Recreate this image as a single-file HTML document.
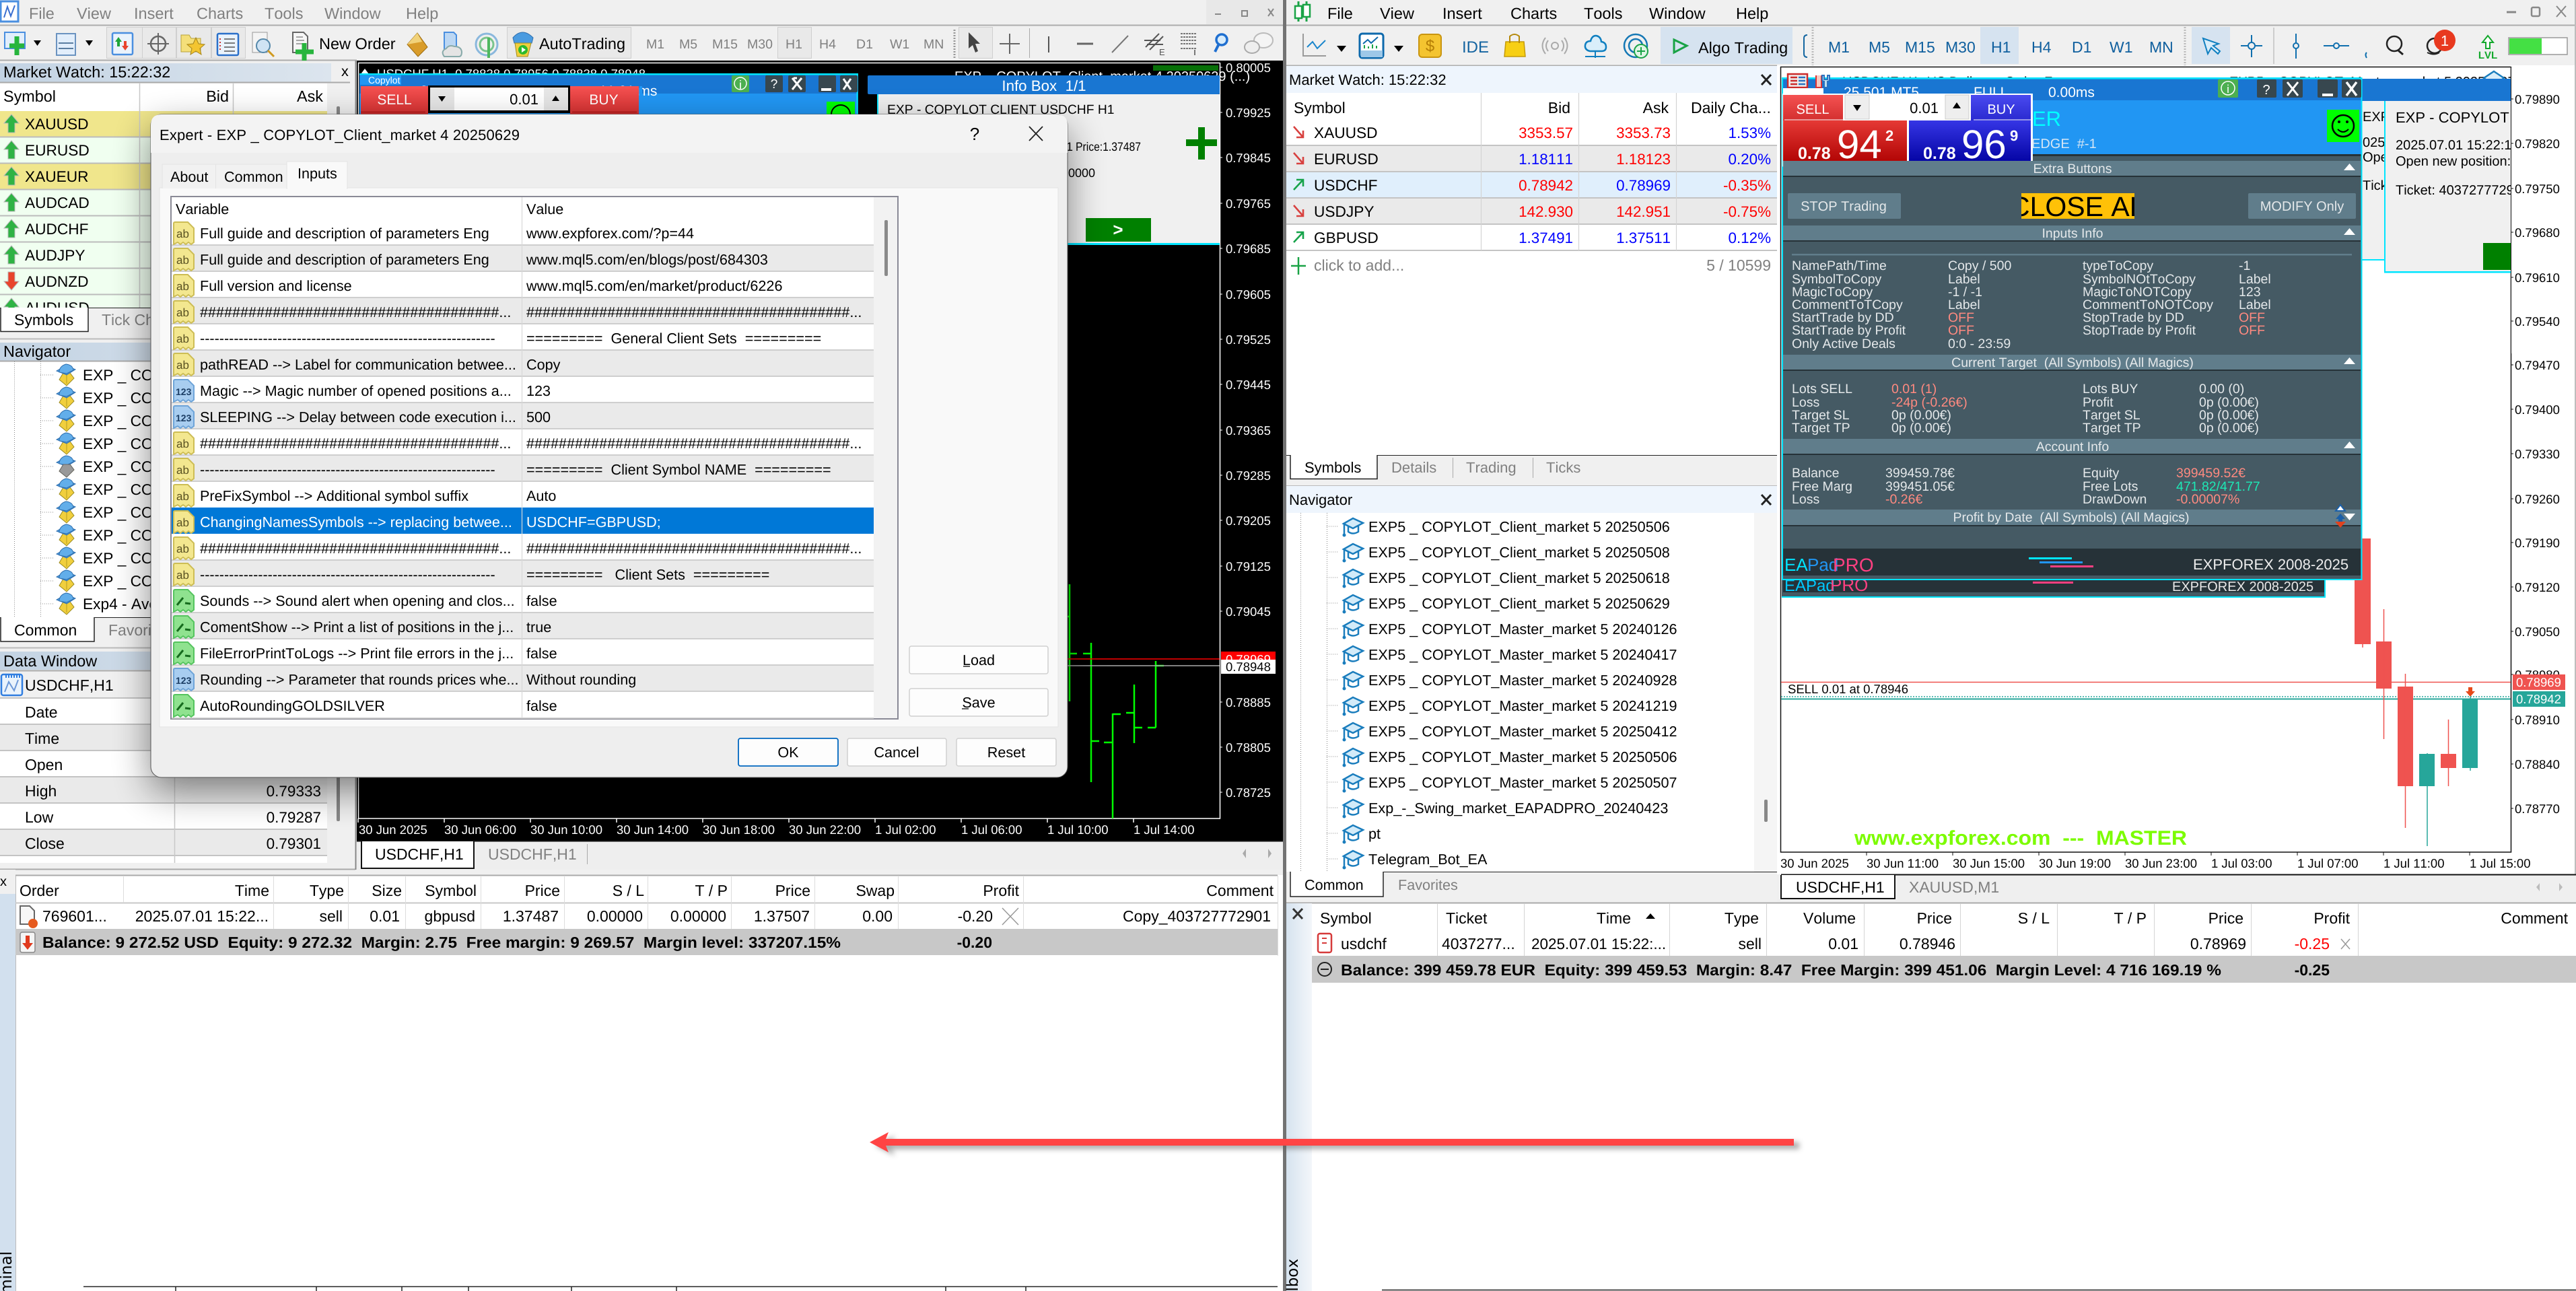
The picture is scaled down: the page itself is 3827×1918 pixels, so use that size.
<!DOCTYPE html>
<html><head><meta charset="utf-8"><title>MT4 MT5</title>
<style>
html,body{margin:0;padding:0;background:#fff;width:3827px;height:1918px;overflow:hidden}
svg{display:block}
text{font-family:"Liberation Sans",sans-serif;font-size:21.6px;white-space:pre;fill:#000;text-rendering:geometricPrecision;font-kerning:none}
.e,.e text{text-anchor:end}
.c,.c text{text-anchor:middle}
.b,.b text{font-weight:bold}
.w text,text.w{fill:#fff}
.g text,text.g{fill:#808080}
.lt text{fill:#e4e8ea}
text.bl{fill:#0000ff}
text.rd{fill:#ff0000}
text.o{fill:#ff8a80}
</style></head><body>
<svg width="3827" height="1918" viewBox="0 0 3827 1918" xmlns="http://www.w3.org/2000/svg">
<defs>
<filter id="bl" x="-20%" y="-20%" width="140%" height="140%"><feGaussianBlur stdDeviation="28"/></filter>
<filter id="bs" x="-5%" y="-100%" width="110%" height="300%"><feGaussianBlur stdDeviation="4"/></filter>
<linearGradient id="t1" x1="0" x2="1" y1="0" y2="0"><stop offset="0" stop-color="#c3d3e3"/><stop offset="1" stop-color="#dce5ee"/></linearGradient>
<linearGradient id="sr" x1="0" x2="0" y1="0" y2="1"><stop offset="0" stop-color="#f55252"/><stop offset="1" stop-color="#d32f2f"/></linearGradient>
<linearGradient id="sb" x1="0" x2="0" y1="0" y2="1"><stop offset="0" stop-color="#4a4af0"/><stop offset="1" stop-color="#2a2ad0"/></linearGradient>
<linearGradient id="br" x1="0" x2="0" y1="0" y2="1"><stop offset="0" stop-color="#e53935"/><stop offset="1" stop-color="#ad0000"/></linearGradient>
<linearGradient id="bb" x1="0" x2="0" y1="0" y2="1"><stop offset="0" stop-color="#3535e5"/><stop offset="1" stop-color="#00009e"/></linearGradient>
<linearGradient id="sd" x1="0" x2="1" y1="0" y2="0"><stop offset="0" stop-color="#d6e3ef"/><stop offset="1" stop-color="#f3f6fa"/></linearGradient>
<g id="up"><path d="M11 0L22 13H16V27H6V13H0Z" fill="#2fb344" stroke="#b9b9b9" stroke-width="1"/></g>
<g id="dn"><path d="M11 27L22 14H16V0H6V14H0Z" fill="#e8442c" stroke="#b9b9b9" stroke-width="1"/></g>
<g id="ab"><path d="M1 3Q1 1 3 1H22L31 10V31L27 34 23 31 19 34 15 31 11 34 7 31 1 34Z" fill="#f3e78f" stroke="#cdbd55" stroke-width="2"/><text x="5" y="24" style="font-size:17px;fill:#5a5222">ab</text></g>
<g id="nm"><path d="M1 3Q1 1 3 1H22L31 10V31L27 34 23 31 19 34 15 31 11 34 7 31 1 34Z" fill="#a8cdf0" stroke="#6ea4d8" stroke-width="2"/><text x="4" y="24" style="font-size:14px;font-weight:bold;fill:#1d3f66">123</text></g>
<g id="bo"><path d="M1 3Q1 1 3 1H22L31 10V31L27 34 23 31 19 34 15 31 11 34 7 31 1 34Z" fill="#8fe28f" stroke="#55c45f" stroke-width="2"/><path d="M6 24L15 13M18 21L26 22" stroke="#156b1d" stroke-width="3" fill="none"/></g>
<g id="hat"><path d="M12 14L6 24 17 33 28 22 22 14Z" fill="#f1cf3d" stroke="#9a8a20"/><path d="M17 17V30" stroke="#b59d1f"/><path d="M2 11L16 3 30 9 17 17Z" fill="#4a9be0" stroke="#2f6fae"/><path d="M6 13Q6 4 16 1 26 2 27 10L17 15Z" fill="#62aeea" stroke="#2f6fae"/></g>
<g id="cap"><path d="M2 11L16 3 31 10 16 18Z" fill="#d3ebf9" stroke="#1a7dbd" stroke-width="2.5"/><path d="M9 15V23Q16 28 24 23V14" fill="none" stroke="#1a7dbd" stroke-width="2.5"/><path d="M3 12V26" stroke="#1a7dbd" stroke-width="2.5"/><circle cx="3" cy="28" r="2.5" fill="#1a7dbd"/></g>
<g id="ad"><path d="M5 3L19 19M19 9V19H9" stroke="#d8413f" stroke-width="2.6" fill="none"/></g>
<g id="au"><path d="M5 19L19 4M9 4H19V14" stroke="#16a34a" stroke-width="2.6" fill="none"/></g>
</defs>

<rect width="3827" height="1918" fill="#fff"/>

<!-- ============ LEFT WINDOW ============ -->
<rect width="1907" height="1300" fill="#f0f0f0"/>
<path d="M0 37.5H1907M0 89.5H530" stroke="#adadad" stroke-width="2"/>
<rect x="1792" width="113" height="36" fill="#e8e8e8"/>
<rect x="1" y="2" width="26" height="30" fill="#fff" stroke="#4a8fe0" stroke-width="3"/><path d="M6 26L11 10 16 24 22 8" stroke="#3a6fd0" stroke-width="2" fill="none"/>
<g class="g" style="font-size:23.5px"><text x="43" y="28" style="font-size:23.5px">File</text><text x="114" y="28" style="font-size:23.5px">View</text><text x="199" y="28" style="font-size:23.5px">Insert</text><text x="292" y="28" style="font-size:23.5px">Charts</text><text x="393" y="28" style="font-size:23.5px">Tools</text><text x="482" y="28" style="font-size:23.5px">Window</text><text x="603" y="28" style="font-size:23.5px">Help</text></g>
<path d="M1805 21h9" stroke="#888" stroke-width="2"/><rect x="1845" y="16" width="8" height="8" fill="none" stroke="#888" stroke-width="2"/><path d="M1884 13l8 11m0-11l-8 11" stroke="#888" stroke-width="2"/>
<!-- left toolbar -->
<g fill="#e9e9e9" stroke="#cfcfcf"><rect x="158.5" y="40.5" width="53" height="46"/><rect x="211.5" y="40.5" width="50" height="46"/><rect x="262.5" y="40.5" width="51" height="46"/><rect x="314.500" y="40.5" width="50" height="46"/><rect x="753.5" y="40.5" width="184" height="46"/><rect x="1155.5" y="40.5" width="50" height="46"/><rect x="1424.5" y="40.5" width="50" height="46"/></g>
<rect x="7" y="48" width="30" height="24" fill="#e2eefb" stroke="#4a8fe0" stroke-width="2"/><path d="M25 54V82M14 68H36" stroke="#27b53d" stroke-width="7"/><path d="M50 60h11l-5.500 8z"/>
<rect x="84" y="50" width="28" height="32" fill="#e2eefb" stroke="#6b93c0" stroke-width="2"/><path d="M87 64h22m-22 8h22" stroke="#5a7da0" stroke-width="2"/><path d="M127 60h11l-5.500 8z"/>
<rect x="167" y="49" width="30" height="32" rx="2" fill="#eaf3fc" stroke="#4a8fe0" stroke-width="2.500"/><path d="M176 55l-5 7h3v7h4v-7h3z" fill="#1fa53a"/><path d="M186 75l5-7h-3v-7h-4v7h-3z" fill="#e8442c"/>
<circle cx="235" cy="65" r="11" fill="none" stroke="#666" stroke-width="2.500"/><path d="M235 49V81M219 65H251" stroke="#666" stroke-width="2"/>
<path d="M269 52h12l3 5h14v20h-29z" fill="#f4df7a" stroke="#b8a23a"/><path d="M291 56l4 9 9 1-7 6 2 9-8-5-8 5 2-9-7-6 9-1z" fill="#f3c530" stroke="#a5851b"/>
<rect x="323" y="50" width="31" height="32" rx="2" fill="#eaf3fc" stroke="#2a70c9" stroke-width="2.500"/><path d="M333 58h16m-16 6h16m-16 6h16m-16 6h16" stroke="#555" stroke-width="1.500"/><path d="M327 57v20" stroke="#c33" stroke-width="2" stroke-dasharray="2 3"/>
<rect x="375" y="48" width="22" height="30" fill="#f4f4f4" stroke="#999"/><circle cx="391" cy="68" r="10" fill="#cfe3f4" stroke="#5588aa" stroke-width="2"/><path d="M398 75l9 9" stroke="#d09a20" stroke-width="3"/>
<path d="M435 48h16l6 6v24h-22z" fill="#f6f6f6" stroke="#666" stroke-width="2"/><path d="M440 55h10m-10 5h12m-12 5h12" stroke="#555"/><path d="M452 64V90M439 77H466" stroke="#27b53d" stroke-width="7"/>
<path d="M620 49L635 70 621 84 605 66Z" fill="#d99c2a" stroke="#9b6c12"/><path d="M620 49L605 66 627 62Z" fill="#f1d27a"/>
<path d="M660 48h14l4 4v22h-18z" fill="#bcd7f3" stroke="#4a8fe0" stroke-width="2"/><path d="M660 84q-6-8 3-12 4-6 12-3 10 0 11 8 0 7-4 7z" fill="#e4e4e4" stroke="#8aa" stroke-width="2"/>
<circle cx="723" cy="66" r="16" fill="none" stroke="#8ab8dd" stroke-width="3"/><circle cx="723" cy="66" r="10" fill="none" stroke="#7ac48d" stroke-width="3"/><path d="M726 56V86" stroke="#4fb860" stroke-width="4"/>
<path d="M762 56q14-16 30 0l-2 8h-26z" fill="#4a9be0" stroke="#2f6fae"/><path d="M765 64h24l-5 20h-16z" fill="#f1cf3d" stroke="#a08b22"/><circle cx="777" cy="74" r="7" fill="#2db92d"/><path d="M775 70l6 4-6 4z" fill="#fff"/>
<text x="474" y="73" style="font-size:23.500px">New Order</text><text x="801" y="73" style="font-size:23.500px">AutoTrading</text>
<g class="g"><text x="960" y="72" style="font-size:19.5px">M1</text><text x="1009" y="72" style="font-size:19.5px">M5</text><text x="1058" y="72" style="font-size:19.5px">M15</text><text x="1110" y="72" style="font-size:19.5px">M30</text><text x="1167" y="72" style="font-size:19.5px">H1</text><text x="1217" y="72" style="font-size:19.5px">H4</text><text x="1272" y="72" style="font-size:19.5px">D1</text><text x="1322" y="72" style="font-size:19.5px">W1</text><text x="1372" y="72" style="font-size:19.5px">MN</text></g>
<path d="M1418 44V86" stroke="#999" stroke-width="3" stroke-dasharray="2 2"/>
<path d="M1439 48L1439 72 1445 67 1449 78 1453 76 1449 65 1456 65Z" fill="#444"/>
<path d="M1500 50V80M1485 65H1515" stroke="#666" stroke-width="2"/><path d="M1529.500 42V86" stroke="#aaa"/>
<path d="M1558 54V78" stroke="#555" stroke-width="2"/><path d="M1600 65H1624" stroke="#666" stroke-width="3"/><path d="M1652 78L1676 53" stroke="#777" stroke-width="2"/>
<path d="M1702 70L1722 50M1708 74L1728 54M1700 60H1724M1704 66H1728" stroke="#555" stroke-width="2"/><text x="1722" y="82" style="font-size:13px;fill:#555">E</text>
<path d="M1754 50h24M1754 55h24M1754 60h24M1754 65h24M1754 72h24" stroke="#777" stroke-width="2" stroke-dasharray="3 1"/><path d="M1775 74v8" stroke="#777" stroke-width="2"/>
<circle cx="1815" cy="59" r="8" fill="#d8ecfb" stroke="#1f6fd0" stroke-width="3.500"/><path d="M1810 67l-5 10" stroke="#1f6fd0" stroke-width="4"/>
<ellipse cx="1877" cy="60" rx="14" ry="11" fill="#f4f4f4" stroke="#bbb" stroke-width="2"/><ellipse cx="1860" cy="70" rx="11" ry="9" fill="#eee" stroke="#aaa" stroke-width="2"/>

<!-- left market watch -->
<rect y="94" width="492" height="28" fill="url(#t1)"/>
<text x="5" y="115" style="font-size:23.400px">Market Watch: 15:22:32</text><text x="507" y="113">x</text>
<rect y="124" width="486" height="340" fill="#fff"/>
<path d="M0 122.500H520" stroke="#aaa" stroke-width="2"/>
<text x="5" y="151" style="font-size:23.400px">Symbol</text><text x="340" y="151" class="e" style="font-size:23.400px">Bid</text><text x="480" y="151" class="e" style="font-size:23.400px">Ask</text>
<rect y="165" width="486" height="39" fill="#f0e68c"/><rect y="204" width="486" height="39" fill="#f0fff0"/><rect y="243" width="486" height="39" fill="#f0e68c"/><rect y="282" width="486" height="156" fill="#f0fff0"/><rect y="438" width="486" height="30" fill="#f0fff0"/>
<path d="M0 203.500H486M0 242.500H486M0 281.500H486M0 320.500H486M0 359.500H486M0 398.500H486M0 437.500H486" stroke="#bcbcbc" stroke-width="2"/>
<path d="M207.500 124V460M346.500 124V460" stroke="#c8c8c8" stroke-width="1.500"/>
<rect x="500" y="158" width="5" height="300" rx="2" fill="#888"/>
<use href="#up" x="6" y="170"/><use href="#up" x="6" y="209"/><use href="#up" x="6" y="248"/><use href="#up" x="6" y="287"/><use href="#up" x="6" y="326"/><use href="#up" x="6" y="365"/><use href="#dn" x="6" y="404"/><use href="#up" x="6" y="443"/>
<g><text x="37" y="192" style="font-size:22.700px">XAUUSD</text><text x="37" y="231" style="font-size:22.700px">EURUSD</text><text x="37" y="270" style="font-size:22.700px">XAUEUR</text><text x="37" y="309" style="font-size:22.700px">AUDCAD</text><text x="37" y="348" style="font-size:22.700px">AUDCHF</text><text x="37" y="387" style="font-size:22.700px">AUDJPY</text><text x="37" y="426" style="font-size:22.700px">AUDNZD</text><text x="37" y="465" style="font-size:22.700px">AUDUSD</text></g>
<!-- symbols tab -->
<rect y="457" width="528" height="52" fill="#f0f0f0"/>
<path d="M0 457.500H528" stroke="#222"/><path d="M1 457V492.500H131V457" fill="#fff" stroke="#222" stroke-width="1.500"/>
<text x="21" y="483" style="font-size:23px">Symbols</text><text x="151" y="483" class="g" style="font-size:23px">Tick Chart</text>
<path d="M0 503.500H528" stroke="#bbb" stroke-width="2"/>
<!-- navigator left -->
<rect y="509" width="492" height="27" fill="url(#t1)"/><text x="5" y="530" style="font-size:23.400px">Navigator</text>
<rect y="537" width="486" height="382" fill="#fff"/><path d="M0 536.500H528" stroke="#aaa" stroke-width="2"/>
<path d="M21.500 537V917M60.500 537V917M60 557h20M60 591h20M60 625h20M60 659h20M60 693h20M60 727h20M60 761h20M60 795h20M60 829h20M60 863h20M60 897h20" stroke="#888" stroke-dasharray="1 2" fill="none"/>
<use href="#hat" x="82" y="540"/><use href="#hat" x="82" y="574"/><use href="#hat" x="82" y="608"/><use href="#hat" x="82" y="642"/><use href="#hat" x="82" y="676"/><use href="#hat" x="82" y="710"/><use href="#hat" x="82" y="744"/><use href="#hat" x="82" y="778"/><use href="#hat" x="82" y="812"/><use href="#hat" x="82" y="846"/><use href="#hat" x="82" y="880"/>
<path d="M94 690L88 700 99 709 110 698 104 690Z" fill="#999" stroke="#666"/>
<g><text x="123" y="565" style="font-size:22.700px">EXP _ COPYLOT</text><text x="123" y="599" style="font-size:22.700px">EXP _ COPYLOT</text><text x="123" y="633" style="font-size:22.700px">EXP _ COPYLOT</text><text x="123" y="667" style="font-size:22.700px">EXP _ COPYLOT</text><text x="123" y="701" style="font-size:22.700px">EXP _ COPYLOT</text><text x="123" y="735" style="font-size:22.700px">EXP _ COPYLOT</text><text x="123" y="769" style="font-size:22.700px">EXP _ COPYLOT</text><text x="123" y="803" style="font-size:22.700px">EXP _ COPYLOT</text><text x="123" y="837" style="font-size:22.700px">EXP _ COPYLOT</text><text x="123" y="871" style="font-size:22.700px">EXP _ COPYLOT</text><text x="123" y="905" style="font-size:22.700px">Exp4 - Average</text></g>
<rect y="917" width="528" height="46" fill="#f0f0f0"/>
<path d="M0 917.500H528" stroke="#222"/><path d="M1 917V953H140V917" fill="#fff" stroke="#222" stroke-width="1.500"/>
<text x="21" y="944" style="font-size:23px">Common</text><text x="161" y="944" class="g" style="font-size:23px">Favorites</text>
<path d="M0 962.500H528" stroke="#bbb" stroke-width="2"/>
<!-- data window -->
<rect y="968" width="492" height="27" fill="url(#t1)"/><text x="5" y="990" style="font-size:23.400px">Data Window</text>
<path d="M0 996.500H528" stroke="#aaa" stroke-width="2"/>
<rect y="998" width="486" height="39" fill="#f0f0f0"/>
<rect x="2" y="1002" width="31" height="31" rx="3" fill="#eaf3fc" stroke="#2f7de0" stroke-width="2.500"/><path d="M7 1028L13 1013 21 1026 27 1010" stroke="#6c98d8" stroke-width="2" fill="none"/><path d="M8 1005h22" stroke="#2f7de0" stroke-width="4" stroke-dasharray="2 2"/>
<text x="37" y="1026" style="font-size:23px">USDCHF,H1</text>
<rect y="1038" width="486" height="244" fill="#fff"/><rect y="1076" width="486" height="39" fill="#eaeaea"/><rect y="1154" width="486" height="39" fill="#eaeaea"/><rect y="1232" width="486" height="39" fill="#eaeaea"/>
<path d="M0 1037H486M0 1076H486M0 1115H486M0 1154H486M0 1193H486M0 1232H486M0 1271H486" stroke="#c4c4c4" stroke-width="2"/><path d="M259.500 1038V1282" stroke="#c8c8c8" stroke-width="1.500"/>
<rect x="500" y="1040" width="5" height="180" rx="2" fill="#888"/>
<g><text x="37" y="1066" style="font-size:23px">Date</text><text x="37" y="1105" style="font-size:23px">Time</text><text x="37" y="1144" style="font-size:23px">Open</text><text x="37" y="1183" style="font-size:23px">High</text><text x="37" y="1222" style="font-size:23px">Low</text><text x="37" y="1261" style="font-size:23px">Close</text></g>
<g class="e"><text x="477" y="1183" style="font-size:22.500px">0.79333</text><text x="477" y="1222" style="font-size:22.500px">0.79287</text><text x="477" y="1261" style="font-size:22.500px">0.79301</text></g>
<path d="M0 1291.500H528" stroke="#aaa" stroke-width="2"/><path d="M528.500 90V1292" stroke="#888" stroke-width="2"/>

<!-- left chart -->
<rect x="530" y="90" width="1376" height="1159" fill="#000"/>
<path d="M532.500 93V1216H1812.500V93M532 93.500H1812" fill="none" stroke="#fff" stroke-width="1.500"/>
<g class="w"><text x="1821" y="107" style="font-size:18.500px">0.80005</text><text x="1821" y="174" style="font-size:18.500px">0.79925</text><text x="1821" y="241" style="font-size:18.500px">0.79845</text><text x="1821" y="309" style="font-size:18.500px">0.79765</text><text x="1821" y="376" style="font-size:18.500px">0.79685</text><text x="1821" y="444" style="font-size:18.500px">0.79605</text><text x="1821" y="511" style="font-size:18.500px">0.79525</text><text x="1821" y="578" style="font-size:18.500px">0.79445</text><text x="1821" y="646" style="font-size:18.500px">0.79365</text><text x="1821" y="713" style="font-size:18.500px">0.79285</text><text x="1821" y="780" style="font-size:18.500px">0.79205</text><text x="1821" y="848" style="font-size:18.500px">0.79125</text><text x="1821" y="915" style="font-size:18.500px">0.79045</text><text x="1821" y="1050" style="font-size:18.500px">0.78885</text><text x="1821" y="1117" style="font-size:18.500px">0.78805</text><text x="1821" y="1184" style="font-size:18.500px">0.78725</text></g>
<path d="M1812 100h4M1812 167h4M1812 234h4M1812 302h4M1812 369h4M1812 437h4M1812 504h4M1812 571h4M1812 639h4M1812 706h4M1812 773h4M1812 841h4M1812 908h4M1812 1043h4M1812 1110h4M1812 1177h4" stroke="#fff"/>
<g class="w"><text x="533" y="1239" style="font-size:18.500px">30 Jun 2025</text><text x="660" y="1239" style="font-size:18.500px">30 Jun 06:00</text><text x="788" y="1239" style="font-size:18.500px">30 Jun 10:00</text><text x="916" y="1239" style="font-size:18.500px">30 Jun 14:00</text><text x="1044" y="1239" style="font-size:18.500px">30 Jun 18:00</text><text x="1172" y="1239" style="font-size:18.500px">30 Jun 22:00</text><text x="1300" y="1239" style="font-size:18.500px">1 Jul 02:00</text><text x="1428" y="1239" style="font-size:18.500px">1 Jul 06:00</text><text x="1556" y="1239" style="font-size:18.500px">1 Jul 10:00</text><text x="1684" y="1239" style="font-size:18.500px">1 Jul 14:00</text></g>
<path d="M532 1216v6M660 1216v6M788 1216v6M916 1216v6M1044 1216v6M1172 1216v6M1300 1216v6M1428 1216v6M1556 1216v6M1684 1216v6" stroke="#fff" stroke-width="1.500"/>
<!-- left candles -->
<path d="M1589 868V1042M1586 916H1589M1589 971H1600M1621 955V1162M1609 971H1621M1621 1101H1633M1653 1060V1216M1640 1103H1653M1653 1061H1665M1685 1017V1104M1673 1059H1685M1685 1081H1697M1717 982V1081M1705 1081H1717M1717 989H1729" stroke="#00ff00" stroke-width="2.500" fill="none"/>
<path d="M1586 979H1812" stroke="#f00" stroke-width="1.500"/><path d="M1586 989H1812" stroke="#aaa" stroke-width="1.500"/>
<rect x="1814" y="968" width="81" height="12" fill="#f00"/><text x="1821" y="986" class="w" style="font-size:18.500px">0.78969</text><rect x="1814" y="980" width="81" height="21" fill="#fff"/><text x="1821" y="997" style="font-size:18.500px">0.78948</text>
<!-- left chart header/panels -->
<text x="560" y="116" class="w" style="font-size:18.500px">USDCHF,H1  0.78838 0.78956 0.78838 0.78948</text>
<path d="M536 110l6-8 6 8z" fill="#fff"/>
<text x="1418" y="120" class="w" style="font-size:20px">EXP _ COPYLOT_Client_market 4 20250629 (...)</text>
<rect x="1713" y="97" width="97" height="8" fill="#087008"/>
<rect x="534" y="109" width="741" height="300" fill="#1976d2"/><rect x="534" y="109" width="741" height="2.500" fill="#00e5ff"/>
<rect x="534" y="139" width="740" height="260" fill="#2196f3"/>
<rect x="1272.500" y="109" width="2" height="200" fill="#00e5ff"/>
<rect x="535" y="112" width="61" height="14" fill="#2196f3"/><text x="547" y="124" class="w" style="font-size:14px">Copylot</text>
<g class="w"><text x="624" y="142" style="font-size:21px">25 620 MT4</text><text x="792" y="142" style="font-size:21px">FULL</text><text x="890" y="142" style="font-size:21px">11.01 ms</text></g>
<rect x="536" y="128" width="100" height="44" fill="url(#sr)"/><text x="586" y="155" class="w c" style="font-size:21px">SELL</text>
<rect x="636" y="127" width="211" height="41" fill="#000"/><rect x="639" y="130" width="205" height="34" fill="#fff"/><rect x="639" y="130" width="36" height="34" fill="#e6e6e6"/><rect x="808" y="130" width="36" height="34" fill="#e6e6e6"/>
<path d="M651 143h11l-5.500 8z"/><path d="M820 150h11l-5.500-8z"/><text x="800" y="155" class="e" style="font-size:22px">0.01</text>
<rect x="847" y="128" width="102" height="44" fill="url(#sr)"/><text x="897" y="155" class="w c" style="font-size:21px">BUY</text>
<rect x="950" y="128" width="4" height="44" fill="#2196f3"/>
<path d="M536 166.500H632M850 166.500H946" stroke="#b71c1c" stroke-width="2"/>
<rect x="1087" y="112" width="26" height="25" rx="2" fill="#4caf50"/><text x="1100" y="132" class="w c" style="font-size:18px">i</text><circle cx="1100" cy="124" r="9" fill="none" stroke="#fff" stroke-width="1.500"/>
<g fill="#37474f"><rect x="1137" y="112" width="26" height="25" rx="2"/><rect x="1171" y="112" width="26" height="25" rx="2"/><rect x="1216" y="112" width="26" height="25" rx="2"/><rect x="1248" y="112" width="26" height="25" rx="2"/></g>
<text x="1150" y="131" class="w c" style="font-size:19px">?</text><path d="M1177 116l14 17m0-17l-14 17M1179 116l5 0" stroke="#fff" stroke-width="3"/><path d="M1220 133h15" stroke="#fff" stroke-width="4"/><path d="M1253 117l11 16m0-16l-11 16" stroke="#fff" stroke-width="3"/>
<rect x="1228" y="151" width="42" height="60" fill="#00ff00"/><circle cx="1249" cy="170" r="14" fill="none" stroke="#000" stroke-width="2"/>
<!-- info box left -->
<rect x="1289" y="112" width="523" height="28" rx="2" fill="#1976d2"/><text x="1551" y="135" class="w c" style="font-size:22.300px">Info Box  1/1</text>
<rect x="1303" y="140" width="509" height="224" fill="#f0f0f0"/><rect x="1303" y="140" width="2" height="224" fill="#00e5ff"/><rect x="1303" y="361" width="509" height="3" fill="#00e5ff"/>
<text x="1318" y="169" style="font-size:19.300px">EXP - COPYLOT CLIENT USDCHF H1</text>
<text x="1584" y="224" style="font-size:18px">1</text><text x="1598" y="224" style="font-size:18px" textLength="97" lengthAdjust="spacingAndGlyphs">Price:1.37487</text><text x="1577" y="263" style="font-size:18px">00000</text>
<path d="M1785 189V237M1762 212H1808" stroke="#008000" stroke-width="10"/>
<rect x="1613" y="324" width="97" height="35" fill="#008000"/><text x="1661" y="350" class="w c b" style="font-size:26px">&gt;</text>

<!-- left tabs -->
<rect x="530" y="1249" width="1377" height="43" fill="#eeeeee"/>
<path d="M530 1249.500H1906" stroke="#111" stroke-width="2"/>
<path d="M537 1250V1290H704V1250" fill="#fff" stroke="#111" stroke-width="2"/>
<text x="557" y="1277" style="font-size:23px">USDCHF,H1</text><text x="725" y="1277" class="g" style="font-size:23px">USDCHF,H1</text><path d="M872.500 1254V1284" stroke="#aaa"/>
<path d="M1846 1268l5-7v14zM1884 1261l5 7-5 7z" fill="#aaa"/>

<!-- left terminal -->
<rect y="1300" width="23" height="618" fill="#d2e0ee"/><rect y="1292" width="23" height="36" fill="#f0f0f0"/>
<text x="0" y="1316" style="font-size:20px">x</text>
<rect x="23" y="1300" width="1884" height="618" fill="#fff"/>
<path d="M23.500 1300V1918" stroke="#bbb"/><path d="M23 1300.500H1898" stroke="#aaa" stroke-width="2"/><path d="M23 1341.500H1898" stroke="#c8c8c8" stroke-width="2"/>
<path d="M183.500 1301V1341M406.500 1301V1380M517.500 1301V1380M602.500 1301V1380M714.500 1301V1380M838.500 1301V1380M962.500 1301V1380M1086.500 1301V1380M1210.500 1301V1380M1334.500 1301V1380M1520.500 1301V1380M1898.500 1301V1420" stroke="#ddd"/>
<text x="29" y="1331" style="font-size:23px">Order</text>
<g class="e"><text x="400" y="1331" style="font-size:23px">Time</text><text x="511" y="1331" style="font-size:23px">Type</text><text x="597" y="1331" style="font-size:23px">Size</text><text x="708" y="1331" style="font-size:23px">Symbol</text><text x="832" y="1331" style="font-size:23px">Price</text><text x="957" y="1331" style="font-size:23px">S / L</text><text x="1081" y="1331" style="font-size:23px">T / P</text><text x="1204" y="1331" style="font-size:23px">Price</text><text x="1329" y="1331" style="font-size:23px">Swap</text><text x="1514" y="1331" style="font-size:23px">Profit</text><text x="1892" y="1331" style="font-size:23px">Comment</text></g>
<path d="M30 1346h14l7 7v20h-21z" fill="#f7f7f7" stroke="#666" stroke-width="2"/><circle cx="49" cy="1372" r="7" fill="#e65a1e"/>
<text x="63" y="1369" style="font-size:23px">769601...</text>
<g class="e"><text x="399" y="1369" style="font-size:23px">2025.07.01 15:22...</text><text x="509" y="1369" style="font-size:23px">sell</text><text x="594" y="1369" style="font-size:23px">0.01</text><text x="706" y="1369" style="font-size:23px">gbpusd</text><text x="830" y="1369" style="font-size:23px">1.37487</text><text x="955" y="1369" style="font-size:23px">0.00000</text><text x="1079" y="1369" style="font-size:23px">0.00000</text><text x="1203" y="1369" style="font-size:23px">1.37507</text><text x="1326" y="1369" style="font-size:23px">0.00</text><text x="1475" y="1369" style="font-size:23px">-0.20</text><text x="1888" y="1369" style="font-size:23px">Copy_403727772901</text></g>
<path d="M1489 1349l24 25m0-25l-24 25" stroke="#999" stroke-width="1.500"/>
<rect x="23" y="1380" width="1875" height="39" fill="#c8c8c8"/>
<rect x="30" y="1385" width="22" height="30" rx="3" fill="#f5f5f5" stroke="#888" stroke-width="1.500"/><path d="M38 1390v11h-5l8 10 8-10h-5v-11z" fill="#e03a1e"/>
<text x="63" y="1408" class="b" style="font-size:23px" textLength="1186" lengthAdjust="spacingAndGlyphs">Balance: 9 272.52 USD  Equity: 9 272.32  Margin: 2.75  Free margin: 9 269.57  Margin level: 337207.15%</text>
<text x="1474" y="1408" class="b e" style="font-size:23px">-0.20</text>
<path d="M124 1911.500H1898M261 1911v7M470 1911v7M597 1911v7M696 1911v7M849 1911v7M1005 1911v7M1405 1911v7M1524 1911v7" stroke="#222" stroke-width="1.500"/>
<text transform="translate(17,1859) rotate(-90)" class="e" style="font-size:23px;font-family:'DejaVu Sans',sans-serif">Terminal</text>

<!-- DIALOG -->
<rect x="224" y="190" width="1362" height="985" rx="16" fill="#000" opacity=".48" filter="url(#bl)"/>
<rect x="224" y="170" width="1362" height="985" rx="16" fill="#eeeeee" stroke="#555" stroke-width="1"/>
<path d="M224 227V186Q224 170 240 170H1570Q1586 170 1586 186V227Z" fill="#f3f3f3"/>
<text x="237" y="208" style="font-size:22px" textLength="535">Expert - EXP _ COPYLOT_Client_market 4 20250629</text>
<text x="1448" y="208" class="c" style="font-size:26px">?</text><path d="M1529 188l20 21m0-21l-20 21" stroke="#222" stroke-width="1.800"/>
<rect x="237" y="279" width="1335" height="801" fill="#f9f9f9" stroke="#e4e4e4"/>
<path d="M241 280V244H426V280" fill="#f1f1f1" stroke="#e4e4e4"/><path d="M320.500 244V280" stroke="#e4e4e4"/>
<rect x="426" y="240" width="90" height="40" fill="#f9f9f9" stroke="#e4e4e4"/><rect x="427" y="275" width="88" height="6" fill="#f9f9f9"/>
<text x="253" y="270">About</text><text x="333" y="270">Common</text><text x="442" y="265">Inputs</text>
<!-- list -->
<rect x="254" y="292" width="1080" height="776" fill="#fff" stroke="#8a8a96" stroke-width="2"/>
<rect x="1298" y="293" width="35" height="774" fill="#f2f2f2"/>
<rect x="1314" y="327" width="5" height="83" rx="2" fill="#8a8a8a"/>
<g fill="#eaeaea"><rect x="255" y="364" width="1043" height="39"/><rect x="255" y="442" width="1043" height="39"/><rect x="255" y="520" width="1043" height="39"/><rect x="255" y="598" width="1043" height="39"/><rect x="255" y="676" width="1043" height="39"/><rect x="255" y="832" width="1043" height="39"/><rect x="255" y="910" width="1043" height="39"/><rect x="255" y="988" width="1043" height="39"/></g>
<rect x="255" y="754" width="1043" height="39" fill="#0078d7"/>
<path d="M255 364H1298M255 403H1298M255 442H1298M255 481H1298M255 520H1298M255 559H1298M255 598H1298M255 637H1298M255 676H1298M255 715H1298M255 832H1298M255 871H1298M255 910H1298M255 949H1298M255 988H1298M255 1027H1298M255 1067H1298" stroke="#c9c9c9" stroke-width="1.800"/>
<path d="M775.500 293V1067" stroke="#d8d8d8" stroke-width="1.200"/>
<text x="261" y="318">Variable</text><text x="782" y="318">Value</text>
<use href="#ab" x="257" y="329"/><use href="#ab" x="257" y="368"/><use href="#ab" x="257" y="407"/><use href="#ab" x="257" y="446"/><use href="#ab" x="257" y="485"/><use href="#ab" x="257" y="524"/><use href="#nm" x="257" y="563"/><use href="#nm" x="257" y="602"/><use href="#ab" x="257" y="641"/><use href="#ab" x="257" y="680"/><use href="#ab" x="257" y="719"/><use href="#ab" x="257" y="758"/><use href="#ab" x="257" y="797"/><use href="#ab" x="257" y="836"/><use href="#bo" x="257" y="875"/><use href="#bo" x="257" y="914"/><use href="#bo" x="257" y="953"/><use href="#nm" x="257" y="992"/><use href="#bo" x="257" y="1031"/>
<g>
<text x="297" y="354">Full guide and description of parameters Eng</text><text x="782" y="354">www.expforex.com/?p=44</text>
<text x="297" y="393">Full guide and description of parameters Eng</text><text x="782" y="393">www.mql5.com/en/blogs/post/684303</text>
<text x="297" y="432">Full version and license</text><text x="782" y="432">www.mql5.com/en/market/product/6226</text>
<text x="297" y="471">#####################################...</text><text x="782" y="471">########################################...</text>
<text x="297" y="510">-------------------------------------------------------------</text><text x="782" y="510">=========  General Client Sets  =========</text>
<text x="297" y="549">pathREAD --&gt; Label for communication betwee...</text><text x="782" y="549">Copy</text>
<text x="297" y="588">Magic --&gt; Magic number of opened positions a...</text><text x="782" y="588">123</text>
<text x="297" y="627">SLEEPING --&gt; Delay between code execution i...</text><text x="782" y="627">500</text>
<text x="297" y="666">#####################################...</text><text x="782" y="666">########################################...</text>
<text x="297" y="705">-------------------------------------------------------------</text><text x="782" y="705">=========  Client Symbol NAME  =========</text>
<text x="297" y="744">PreFixSymbol --&gt; Additional symbol suffix</text><text x="782" y="744">Auto</text>
<text x="297" y="783" class="w">ChangingNamesSymbols --&gt; replacing betwee...</text><text x="782" y="783" class="w">USDCHF=GBPUSD;</text>
<text x="297" y="822">#####################################...</text><text x="782" y="822">########################################...</text>
<text x="297" y="861">-------------------------------------------------------------</text><text x="782" y="861">=========   Client Sets  =========</text>
<text x="297" y="900">Sounds --&gt; Sound alert when opening and clos...</text><text x="782" y="900">false</text>
<text x="297" y="939">ComentShow --&gt; Print a list of positions in the j...</text><text x="782" y="939">true</text>
<text x="297" y="978">FileErrorPrintToLogs --&gt; Print file errors in the j...</text><text x="782" y="978">false</text>
<text x="297" y="1017">Rounding --&gt; Parameter that rounds prices whe...</text><text x="782" y="1017">Without rounding</text>
<text x="297" y="1056">AutoRoundingGOLDSILVER</text><text x="782" y="1056">false</text>
</g>
<g fill="#fdfdfd" stroke="#d0d0d0" stroke-width="1.500"><rect x="1351" y="960" width="206" height="41" rx="3"/><rect x="1351" y="1023" width="206" height="41" rx="3"/><rect x="1259" y="1097" width="147" height="41" rx="3"/><rect x="1421" y="1097" width="148" height="41" rx="3"/></g>
<rect x="1097" y="1097" width="148" height="41" rx="3" fill="#fdfdfd" stroke="#0067c0" stroke-width="1.800"/>
<g class="c"><text x="1454" y="988">Load</text><text x="1454" y="1051">Save</text><text x="1171" y="1125">OK</text><text x="1332" y="1125">Cancel</text><text x="1495" y="1125">Reset</text></g>
<path d="M1431 990h10M1429 1053h10" stroke="#000" stroke-width="1.200"/>

<!-- separator -->
<rect x="1906" y="0" width="5" height="1918" fill="#737373"/>
<rect x="1911" y="0" width="1916" height="1918" fill="#fff"/>

<!-- ============ RIGHT WINDOW ============ -->
<rect x="1911" width="1916" height="97" fill="#f0f0f0"/>
<path d="M1911 37.500H3827" stroke="#adadad" stroke-width="2"/><path d="M1911 97.500H2640" stroke="#adadad" stroke-width="2"/>
<rect x="3825" width="2" height="1342" fill="#bdbdbd"/>
<path d="M1929 2V32M1941 2V32" stroke="#1aa346" stroke-width="3"/><rect x="1924" y="9" width="10" height="18" fill="#fff" stroke="#1aa346" stroke-width="2.500"/><rect x="1936" y="7" width="10" height="18" fill="#fff" stroke="#1aa346" stroke-width="2.500"/>
<text x="1972" y="28" style="font-size:23.500px">File</text><text x="2050" y="28" style="font-size:23.500px">View</text><text x="2143" y="28" style="font-size:23.500px">Insert</text><text x="2244" y="28" style="font-size:23.500px">Charts</text><text x="2353" y="28" style="font-size:23.500px">Tools</text><text x="2450" y="28" style="font-size:23.500px">Window</text><text x="2579" y="28" style="font-size:23.500px">Help</text>
<path d="M3724 18h14" stroke="#888" stroke-width="3"/><rect x="3761" y="11" width="12" height="13" rx="2" fill="none" stroke="#888" stroke-width="2.500"/><path d="M3798 9l14 16m0-16l-14 16" stroke="#888" stroke-width="2"/>
<!-- right toolbar -->
<path d="M1936 50V83H1970" fill="none" stroke="#9a9a9a" stroke-width="2"/><path d="M1942 70L1950 62 1957 72 1969 60" fill="none" stroke="#1a86cc" stroke-width="2"/><path d="M1986 68h14l-7 9z"/>
<rect x="2020" y="50" width="35" height="36" rx="4" fill="#fff" stroke="#0d69ac" stroke-width="3"/><path d="M2025 65l7-6 5 5 10-9" fill="none" stroke="#0d69ac" stroke-width="2"/><path d="M2027 72v-5M2033 72v-3M2039 72v-6M2045 72v-4" stroke="#1aa346" stroke-width="2"/><rect x="2022" y="75" width="32" height="10" fill="#9ec8e8"/>
<path d="M2071 68h14l-7 9z"/>
<rect x="2108" y="51" width="33" height="34" rx="5" fill="#f4c430" stroke="#c99510" stroke-width="2"/><text x="2124.500" y="76" class="c" style="font-size:24px;fill:#b67f06">$</text>
<text x="2172" y="78" style="font-size:24px;fill:#1464a0">IDE</text>
<path d="M2237 62h27l2 22h-31z" fill="#f7cf14" stroke="#c49a0a" stroke-width="1.500"/><path d="M2243 64V54q7-6 14 0V64" fill="none" stroke="#b5890a" stroke-width="2"/>
<g fill="none" stroke="#aaa" stroke-width="2"><circle cx="2310" cy="68" r="5"/><path d="M2300 60q-6 8 0 16M2320 60q6 8 0 16M2296 56q-9 12 0 24M2324 56q9 12 0 24"/></g>
<path d="M2362 76q-8-2-7-9 1-6 8-6 2-8 8-8 7 1 8 9 7 1 7 8 0 6-7 6z" fill="#d9eefa" stroke="#0f7fc0" stroke-width="2.500"/><path d="M2370 76V86M2355 84H2385" stroke="#0f7fc0" stroke-width="2"/>
<circle cx="2430" cy="68" r="17" fill="none" stroke="#1578b5" stroke-width="2.500"/><circle cx="2430" cy="68" r="10" fill="none" stroke="#1578b5" stroke-width="2.500"/><circle cx="2438" cy="76" r="10" fill="#dff5e5" stroke="#1aa346" stroke-width="2"/><path d="M2438 70V82M2432 76H2444" stroke="#1aa346" stroke-width="2"/>
<rect x="2467" y="40" width="196" height="55" fill="#d6e3f0"/><path d="M2487 59V78L2506 68Z" fill="none" stroke="#1aa346" stroke-width="3"/>
<text x="2523" y="79" style="font-size:23.500px">Algo Trading</text>
<path d="M2685 52q-5 0-5 5V80q0 5 5 5" fill="none" stroke="#1466a0" stroke-width="2"/>
<path d="M2693 40V97M3246 40V97" stroke="#bbb" stroke-width="3" stroke-dasharray="2 2"/>
<rect x="2942" y="40" width="57" height="55" fill="#d6e3f0"/><rect x="3256" y="40" width="57" height="55" fill="#d6e3f0"/>
<g><text x="2716" y="78" style="font-size:23px;fill:#0f5f9e">M1</text><text x="2776" y="78" style="font-size:23px;fill:#0f5f9e">M5</text><text x="2830" y="78" style="font-size:23px;fill:#0f5f9e">M15</text><text x="2890" y="78" style="font-size:23px;fill:#0f5f9e">M30</text><text x="2958" y="78" style="font-size:23px;fill:#0f5f9e">H1</text><text x="3018" y="78" style="font-size:23px;fill:#0f5f9e">H4</text><text x="3078" y="78" style="font-size:23px;fill:#0f5f9e">D1</text><text x="3134" y="78" style="font-size:23px;fill:#0f5f9e">W1</text><text x="3193" y="78" style="font-size:23px;fill:#0f5f9e">MN</text></g>
<path d="M3273 57L3280 80 3285 71 3295 80 3298 76 3288 68 3296 65Z" fill="#d9edf9" stroke="#0f7fc0" stroke-width="2"/>
<path d="M3345 52V85M3329 68H3361" stroke="#0f6fae" stroke-width="2"/><circle cx="3345" cy="68" r="5" fill="#f0f0f0" stroke="#0f6fae" stroke-width="2"/>
<path d="M3378 41V95" stroke="#aaa"/>
<path d="M3411 50V87" stroke="#0f6fae" stroke-width="2"/><circle cx="3411" cy="68" r="4" fill="#f0f0f0" stroke="#0f6fae" stroke-width="2"/>
<path d="M3452 68H3490" stroke="#0f6fae" stroke-width="2"/><circle cx="3471" cy="68" r="4" fill="#f0f0f0" stroke="#0f6fae" stroke-width="2"/>
<path d="M3516 78q-3 3 0 8" fill="none" stroke="#0f6fae" stroke-width="2"/>
<circle cx="3557" cy="65" r="11" fill="none" stroke="#222" stroke-width="2.500"/><path d="M3563 75l7 6" stroke="#222" stroke-width="3"/>
<circle cx="3617" cy="68" r="11" fill="none" stroke="#222" stroke-width="2.500"/><path d="M3606 78q10 5 18 0" fill="none" stroke="#222" stroke-width="2"/>
<circle cx="3632" cy="60" r="16" fill="#e8391f"/><text x="3632" y="68" class="c w" style="font-size:22px">1</text>
<path d="M3696 53l8 10h-5v9h-6v-9h-5z" fill="#fff" stroke="#12a82b" stroke-width="2"/><text x="3696" y="87" class="c" style="font-size:15px;font-weight:bold;fill:#12a82b">LVL</text>
<rect x="3727" y="56" width="87" height="25" fill="#fff" stroke="#999" stroke-width="1.500"/><rect x="3728" y="57" width="48" height="23" fill="#44e044"/>

<!-- right market watch -->
<rect x="1911" y="98" width="729" height="40" fill="#eef5fd"/>
<text x="1915" y="126" style="font-size:22px">Market Watch: 15:22:32</text>
<path d="M2617 111l14 15m0-15l-14 15" stroke="#222" stroke-width="3"/>
<text x="1922" y="168" style="font-size:23px">Symbol</text>
<text x="2333" y="168" class="e" style="font-size:23px">Bid</text><text x="2479" y="168" class="e" style="font-size:23px">Ask</text><text x="2512" y="168" style="font-size:23px">Daily Cha...</text>
<rect x="1911" y="217" width="729" height="39" fill="#eaeaea"/><rect x="1911" y="256" width="729" height="39" fill="#e0effc"/><rect x="1911" y="295" width="729" height="39" fill="#eaeaea"/>
<path d="M1911 216H2640M1911 255H2640M1911 294H2640M1911 333H2640M1911 372H2640" stroke="#c4c4c4" stroke-width="2"/>
<path d="M2200.500 138V372M2345.500 138V372M2490.500 138V372" stroke="#d4d4d4" stroke-width="1.200"/>
<use href="#ad" x="1917" y="185"/><use href="#ad" x="1917" y="224"/><use href="#au" x="1917" y="263"/><use href="#ad" x="1917" y="302"/><use href="#au" x="1917" y="341"/>
<g><text x="1952" y="205" style="font-size:22.700px">XAUUSD</text><text x="1952" y="244" style="font-size:22.700px">EURUSD</text><text x="1952" y="283" style="font-size:22.700px">USDCHF</text><text x="1952" y="322" style="font-size:22.700px">USDJPY</text><text x="1952" y="361" style="font-size:22.700px">GBPUSD</text></g>
<g class="e">
<text x="2337" y="205" class="rd" style="font-size:22.400px">3353.57</text><text x="2482" y="205" class="rd" style="font-size:22.400px">3353.73</text><text x="2631" y="205" class="bl" style="font-size:22.400px">1.53%</text>
<text x="2337" y="244" class="bl" style="font-size:22.400px">1.18111</text><text x="2482" y="244" class="rd" style="font-size:22.400px">1.18123</text><text x="2631" y="244" class="bl" style="font-size:22.400px">0.20%</text>
<text x="2337" y="283" class="rd" style="font-size:22.400px">0.78942</text><text x="2482" y="283" class="bl" style="font-size:22.400px">0.78969</text><text x="2631" y="283" class="rd" style="font-size:22.400px">-0.35%</text>
<text x="2337" y="322" class="rd" style="font-size:22.400px">142.930</text><text x="2482" y="322" class="rd" style="font-size:22.400px">142.951</text><text x="2631" y="322" class="rd" style="font-size:22.400px">-0.75%</text>
<text x="2337" y="361" class="bl" style="font-size:22.400px">1.37491</text><text x="2482" y="361" class="bl" style="font-size:22.400px">1.37511</text><text x="2631" y="361" class="bl" style="font-size:22.400px">0.12%</text>
</g>
<path d="M1929 382V408M1918 395H1940" stroke="#1aa346" stroke-width="2.500"/>
<text x="1952" y="402" class="g" style="font-size:23px">click to add...</text><text x="2631" y="402" class="g e" style="font-size:23px">5 / 10599</text>
<!-- right symbols tab -->
<rect x="1911" y="676" width="729" height="46" fill="#f0f0f0"/><path d="M1911 676.500H2640" stroke="#222"/>
<path d="M1917 676V711.500H2046V676" fill="#fff" stroke="#222" stroke-width="1.500"/>
<text x="1938" y="702" style="font-size:22px">Symbols</text><g class="g"><text x="2067" y="702" style="font-size:22px">Details</text><text x="2178" y="702" style="font-size:22px">Trading</text><text x="2297" y="702" style="font-size:22px">Ticks</text></g>
<path d="M2158.500 680V710M2277.500 680V710" stroke="#aaa"/>
<!-- right navigator -->
<rect x="1911" y="722" width="729" height="40" fill="#eef5fd"/><path d="M1911 721.500H2640" stroke="#bbb"/>
<text x="1915" y="750" style="font-size:22px">Navigator</text><path d="M2617 735l14 15m0-15l-14 15" stroke="#222" stroke-width="3"/>
<rect x="2606" y="762" width="34" height="533" fill="#f5f5f5"/><rect x="2621" y="1188" width="5" height="33" rx="2" fill="#888"/>
<path d="M1932.500 762V1295M1971.500 762V1295M1971 782h18M1971 820h18M1971 858h18M1971 896h18M1971 934h18M1971 972h18M1971 1010h18M1971 1048h18M1971 1086h18M1971 1124h18M1971 1162h18M1971 1200h18M1971 1238h18M1971 1276h18" stroke="#888" stroke-dasharray="1 2" fill="none"/>
<use href="#cap" x="1994" y="767"/><use href="#cap" x="1994" y="805"/><use href="#cap" x="1994" y="843"/><use href="#cap" x="1994" y="881"/><use href="#cap" x="1994" y="919"/><use href="#cap" x="1994" y="957"/><use href="#cap" x="1994" y="995"/><use href="#cap" x="1994" y="1033"/><use href="#cap" x="1994" y="1071"/><use href="#cap" x="1994" y="1109"/><use href="#cap" x="1994" y="1147"/><use href="#cap" x="1994" y="1185"/><use href="#cap" x="1994" y="1223"/><use href="#cap" x="1994" y="1261"/>
<g>
<text x="2033" y="790">EXP5 _ COPYLOT_Client_market 5 20250506</text><text x="2033" y="828">EXP5 _ COPYLOT_Client_market 5 20250508</text><text x="2033" y="866">EXP5 _ COPYLOT_Client_market 5 20250618</text><text x="2033" y="904">EXP5 _ COPYLOT_Client_market 5 20250629</text>
<text x="2033" y="942">EXP5 _ COPYLOT_Master_market 5 20240126</text><text x="2033" y="980">EXP5 _ COPYLOT_Master_market 5 20240417</text><text x="2033" y="1018">EXP5 _ COPYLOT_Master_market 5 20240928</text><text x="2033" y="1056">EXP5 _ COPYLOT_Master_market 5 20241219</text><text x="2033" y="1094">EXP5 _ COPYLOT_Master_market 5 20250412</text><text x="2033" y="1132">EXP5 _ COPYLOT_Master_market 5 20250506</text><text x="2033" y="1170">EXP5 _ COPYLOT_Master_market 5 20250507</text>
<text x="2033" y="1208">Exp_-_Swing_market_EAPADPRO_20240423</text><text x="2033" y="1246">pt</text><text x="2033" y="1284">Telegram_Bot_EA</text>
</g>
<rect x="1911" y="1295" width="729" height="47" fill="#f0f0f0"/>
<path d="M2055 1295.500H2640" stroke="#222"/><path d="M1917 1295V1332H2055V1295" fill="#fff" stroke="#222" stroke-width="1.500"/>
<text x="1938" y="1322">Common</text><text x="2077" y="1322" class="g">Favorites</text>

<!-- right chart -->
<path d="M2645.500 99V1266H3730.500V99M2645 99.500H3730" fill="none" stroke="#111" stroke-width="1.500"/>
<g><text x="3736" y="549" style="font-size:18.500px">0.79470</text><text x="3736" y="615" style="font-size:18.500px">0.79400</text><text x="3736" y="681" style="font-size:18.500px">0.79330</text><text x="3736" y="748" style="font-size:18.500px">0.79260</text><text x="3736" y="813" style="font-size:18.500px">0.79190</text><text x="3736" y="879" style="font-size:18.500px">0.79120</text><text x="3736" y="945" style="font-size:18.500px">0.79050</text><text x="3736" y="1009" style="font-size:18.500px">0.78980</text><text x="3736" y="1076" style="font-size:18.500px">0.78910</text><text x="3736" y="1142" style="font-size:18.500px">0.78840</text><text x="3736" y="1208" style="font-size:18.500px">0.78770</text></g>
<path d="M3730 542h4M3730 608h4M3730 674h4M3730 741h4M3730 806h4M3730 872h4M3730 938h4M3730 1002h4M3730 1069h4M3730 1135h4M3730 1201h4" stroke="#111"/>
<path d="M2646 1013.500H3730" stroke="#ef5350" stroke-width="1.500"/>
<path d="M2646 1035H3730" stroke="#26a69a" stroke-width="1.500" stroke-dasharray="2 2"/>
<path d="M2646 1038.500H3730" stroke="#26a69a" stroke-width="2"/>
<text x="2656" y="1030" style="font-size:18.500px">SELL 0.01 at 0.78946</text>
<g fill="#ef5350"><rect x="3498" y="800" width="24" height="157"/><rect x="3530" y="953" width="23" height="70"/><rect x="3562" y="1020" width="23" height="148"/><rect x="3626" y="1120" width="23" height="21"/></g>
<path d="M3510 957V962M3541.500 905V1098M3573.500 1001V1230M3637.500 1069V1168" stroke="#ef5350" stroke-width="1.500"/>
<g fill="#26a69a"><rect x="3594" y="1120" width="23" height="48"/><rect x="3658" y="1038" width="23" height="103"/></g>
<path d="M3606 1119V1257M3670 1035V1145" stroke="#26a69a" stroke-width="1.500"/>
<path d="M3667 1021h6v6h4l-7 8-7-8h4z" fill="#e64a19"/>
<rect x="3733" y="1002" width="78" height="23" fill="#ef5350"/><rect x="3733" y="1027" width="78" height="23" fill="#26a69a"/>
<g class="w"><text x="3738" y="1020" style="font-size:18.500px">0.78969</text><text x="3738" y="1045" style="font-size:18.500px">0.78942</text></g>
<text x="2755" y="1255" style="font-size:30px;font-weight:bold;fill:#7cfc00" textLength="494" lengthAdjust="spacingAndGlyphs">www.expforex.com  ---  MASTER</text>
<g><text x="2645" y="1289" style="font-size:18.500px">30 Jun 2025</text><text x="2773" y="1289" style="font-size:18.500px">30 Jun 11:00</text><text x="2901" y="1289" style="font-size:18.500px">30 Jun 15:00</text><text x="3029" y="1289" style="font-size:18.500px">30 Jun 19:00</text><text x="3157" y="1289" style="font-size:18.500px">30 Jun 23:00</text><text x="3285" y="1289" style="font-size:18.500px">1 Jul 03:00</text><text x="3413" y="1289" style="font-size:18.500px">1 Jul 07:00</text><text x="3541" y="1289" style="font-size:18.500px">1 Jul 11:00</text><text x="3669" y="1289" style="font-size:18.500px">1 Jul 15:00</text></g>
<path d="M2773 1266v5M2901 1266v5M3029 1266v5M3157 1266v5M3285 1266v5M3413 1266v5M3541 1266v5M3669 1266v5" stroke="#111"/>
<rect x="2640" y="1299" width="1187" height="42" fill="#efefef"/><path d="M2646 1299.500H3827" stroke="#111" stroke-width="2"/>
<path d="M2646 1300V1335H2815V1300" fill="#fff" stroke="#111" stroke-width="2"/>
<text x="2668" y="1326" style="font-size:23px">USDCHF,H1</text><text x="2836" y="1326" class="g" style="font-size:23px">XAUUSD,M1</text>
<path d="M3768 1318l5-6v12zM3802 1312l5 6-5 6z" fill="#bbb"/>
<path d="M1911 1341.500H3827" stroke="#aaa" stroke-width="2"/>

<!-- Behind EA panel -->
<text x="2737" y="128" style="font-size:20px">USDCHF,H1: US Dollar vs Swiss Franc</text>
<text x="3312" y="128" style="font-size:20px">EXP5 _ COPYLOT_Master_market 5 20250507</text>
<path d="M3705 106l15 10-15 10-15-10z" fill="#d9edf9" stroke="#1a7dbd" stroke-width="2.500"/>
<!-- back panel bottom -->
<rect x="2647" y="862" width="808" height="26" fill="#455a64"/><rect x="2649" y="862" width="806" height="18" fill="#263238"/>
<rect x="2647" y="886" width="808" height="2" fill="#00e5ff"/><rect x="3453" y="862" width="2" height="26" fill="#00e5ff"/>
<text x="2651" y="878" style="font-size:24px;fill:#00c8ff">EAPad</text><text x="2719" y="878" style="font-size:26px;fill:#ff4081">PRO</text>
<rect x="3020" y="864" width="60" height="3" fill="#ff4081"/><text x="3227" y="878" style="font-size:20px;fill:#e8e8e8">EXPFOREX 2008-2025</text>
<!-- info box right -->
<rect x="3509" y="117" width="221" height="33" fill="#1976d2"/>
<rect x="3509" y="150" width="40" height="237" fill="#f0f0f0"/><rect x="3509" y="385" width="40" height="2" fill="#00e5ff"/>
<g><text x="3510" y="180" style="font-size:20px">EXP</text><text x="3510" y="218" style="font-size:20px">025</text><text x="3510" y="240" style="font-size:20px">Oper</text><text x="3510" y="282" style="font-size:20px">Ticke</text></g>
<rect x="3542" y="150" width="188" height="255" fill="#f0f0f0"/><rect x="3542" y="150" width="2" height="255" fill="#00e5ff"/><rect x="3542" y="403" width="188" height="2.500" fill="#00e5ff"/>
<text x="3559" y="182" style="font-size:22px">EXP - COPYLOT CLIENT</text>
<g><text x="3559" y="222" style="font-size:20px">2025.07.01 15:22:17</text><text x="3559" y="246" style="font-size:20px">Open new position: USD</text><text x="3559" y="289" style="font-size:20px">Ticket: 4037277729</text></g>
<rect x="3689" y="361" width="41" height="40" fill="#008000"/>
<!-- scale column over the info box overflow -->
<rect x="3731" y="100" width="94" height="425" fill="#fff"/>
<rect x="3730" y="100" width="1" height="425" fill="#111"/>
<g><text x="3736" y="154" style="font-size:18.500px">0.79890</text><text x="3736" y="220" style="font-size:18.500px">0.79820</text><text x="3736" y="287" style="font-size:18.500px">0.79750</text><text x="3736" y="352" style="font-size:18.500px">0.79680</text><text x="3736" y="419" style="font-size:18.500px">0.79610</text><text x="3736" y="484" style="font-size:18.500px">0.79540</text></g>
<path d="M3730 147h4M3730 213h4M3730 280h4M3730 345h4M3730 412h4M3730 477h4" stroke="#111"/>

<!-- EA panel right -->
<rect x="2647" y="115" width="862" height="747" fill="#455a64"/>
<rect x="2647" y="115" width="862" height="2.500" fill="#00e5ff"/>
<rect x="2647" y="117" width="2" height="745" fill="#00e5ff"/><rect x="3507.500" y="115" width="2" height="747" fill="#00e5ff"/><rect x="2647" y="860" width="862" height="2" fill="#00e5ff"/>
<rect x="2649" y="117.500" width="858.500" height="32" fill="#1976d2"/><rect x="2649" y="149" width="858.500" height="80" fill="#2196f3"/><rect x="2649" y="229" width="858.500" height="3" fill="#263238"/>
<g class="w"><text x="2739" y="144" style="font-size:21px">25 501 MT5</text><text x="2932" y="144" style="font-size:21px">FULL</text><text x="3043" y="144" style="font-size:21px">0.00ms</text></g>
<rect x="3295" y="118" width="30" height="27" rx="2" fill="#4caf50"/><circle cx="3310" cy="131" r="10" fill="none" stroke="#fff" stroke-width="1.500"/><text x="3310" y="138" class="w c" style="font-size:17px">i</text>
<g fill="#37474f"><rect x="3353" y="118" width="29" height="27" rx="2"/><rect x="3391" y="118" width="30" height="27" rx="2"/><rect x="3443" y="118" width="30" height="27" rx="2"/><rect x="3479" y="118" width="29" height="27" rx="2"/></g>
<text x="3367" y="140" class="w c" style="font-size:20px">?</text><path d="M3398 122l16 20m0-20l-16 20" stroke="#fff" stroke-width="3"/><path d="M3450 141h16" stroke="#fff" stroke-width="4"/><path d="M3486 122l15 20m0-20l-15 20" stroke="#fff" stroke-width="3.500"/>
<!-- icons at chart top -->
<rect x="2656" y="110" width="29" height="20" fill="#eee" stroke="#cc2b2b" stroke-width="2.500"/><path d="M2660 115h10m-10 5h10m-10 5h10" stroke="#cc2b2b" stroke-width="2.500"/><path d="M2672 115h10m-10 5h10m-10 5h10" stroke="#2a72c0" stroke-width="2.500"/>
<path d="M2698 112v18h8v-18" fill="#f7c9c0" stroke="#d33" stroke-width="2"/><path d="M2707 112h3v6h5v-6h3v6q0 3-3 3v9h-5v-9q-3 0-3-3z" fill="#bde" stroke="#2a72c0" stroke-width="2"/>
<rect x="2649" y="131" width="60" height="10" fill="#fff"/>
<!-- right trade buttons -->
<rect x="2648" y="139" width="372" height="108.500" fill="#fff"/>
<rect x="2649" y="141" width="89" height="38" fill="url(#sr)"/><text x="2693" y="169" class="w c" style="font-size:20px">SELL</text>
<rect x="2741" y="141" width="184" height="36" fill="#fff"/><rect x="2741" y="141" width="36" height="36" fill="#eeeeee" stroke="#ccc"/><rect x="2890" y="141" width="35" height="36" fill="#eeeeee" stroke="#ccc"/>
<path d="M2753 156h12l-6 9z"/><path d="M2901 161h12l-6-9z"/><text x="2880" y="168" class="e" style="font-size:22px">0.01</text>
<rect x="2928" y="141" width="89" height="38" fill="url(#sb)"/><text x="2973" y="169" class="w c" style="font-size:20px">BUY</text>
<rect x="2649" y="179" width="184" height="67" fill="url(#br)"/><rect x="2836" y="179" width="181" height="67" fill="url(#bb)"/>
<path d="M2651 178H2738M2932 178H3017" stroke="#fff" stroke-width="1"/>
<g class="w"><text x="2671" y="236" class="b" style="font-size:25px">0.78</text><text x="2729" y="235" style="font-size:60px">94</text><text x="2801" y="209" class="b" style="font-size:22px">2</text>
<text x="2857" y="236" class="b" style="font-size:25px">0.78</text><text x="2914" y="235" style="font-size:60px">96</text><text x="2986" y="209" class="b" style="font-size:22px">9</text></g>
<text x="3019" y="187" style="font-size:31px;fill:#00ffff">ER</text><text x="3018" y="220" style="font-size:20px;fill:#d5e6f5">EDGE  #-1</text>
<rect x="3457" y="163" width="48" height="48" fill="#00ff00"/><circle cx="3481" cy="187" r="16" fill="none" stroke="#000" stroke-width="2.500"/><circle cx="3475" cy="181" r="2"/><circle cx="3487" cy="181" r="2"/><path d="M3473 192q8 8 16 0" fill="none" stroke="#000" stroke-width="2"/>
<!-- bands -->
<g fill="#607d8b"><rect x="2649" y="239" width="858" height="22"/><rect x="2649" y="335" width="858" height="22"/><rect x="2649" y="527" width="858" height="22"/><rect x="2649" y="652" width="858" height="22"/><rect x="2649" y="757" width="858" height="23"/><rect x="2662" y="377" width="832" height="2.500"/></g>
<g fill="#263238"><rect x="2649" y="261" width="858" height="2"/><rect x="2649" y="357" width="858" height="2"/><rect x="2649" y="549" width="858" height="2"/><rect x="2649" y="674" width="858" height="2"/><rect x="2649" y="780" width="858" height="2"/></g>
<g class="lt c"><text x="3079" y="257" style="font-size:19.500px">Extra Buttons</text><text x="3079" y="353" style="font-size:19.500px">Inputs Info</text><text x="3079" y="545" style="font-size:19.500px">Current Target  (All Symbols) (All Magics)</text><text x="3079" y="670" style="font-size:19.500px">Account Info</text><text x="3077" y="775" style="font-size:19.500px">Profit by Date  (All Symbols) (All Magics)</text></g>
<path d="M3482 253h17l-8.500-10zM3482 349h17l-8.500-10zM3482 541h17l-8.500-10zM3482 666h17l-8.500-10zM3482 763h17l-8.500 10z" fill="#fff"/>
<path d="M3477 750l7 9h-14z" fill="#fff" stroke="#1a5fa8" stroke-width="2"/><path d="M3477 763l7 8h-4v7h-6v-7h-4z" fill="#1a5fa8"/><path d="M3469 775h16l-8 9z" fill="#e0421e"/>
<rect x="2656" y="287" width="168" height="38" rx="2" fill="#607d8b"/><rect x="3340" y="287" width="160" height="38" rx="2" fill="#607d8b"/>
<g class="lt c"><text x="2739" y="313" style="font-size:20px">STOP Trading</text><text x="3420" y="313" style="font-size:20px">MODIFY Only</text></g>
<svg x="3003" y="287" width="168" height="38" viewBox="0 0 168 38"><rect width="168" height="38" fill="#ffc107"/><text x="-17" y="34" style="font-size:41px">CLOSE ALL</text></svg>
<g class="lt">
<text x="2662" y="401" style="font-size:19.500px">NamePath/Time</text><text x="2894" y="401" style="font-size:19.500px">Copy / 500</text><text x="3094" y="401" style="font-size:19.500px">typeToCopy</text><text x="3326" y="401" style="font-size:19.500px">-1</text>
<text x="2662" y="421" style="font-size:19.500px">SymbolToCopy</text><text x="2894" y="421" style="font-size:19.500px">Label</text><text x="3094" y="421" style="font-size:19.500px">SymbolNOtToCopy</text><text x="3326" y="421" style="font-size:19.500px">Label</text>
<text x="2662" y="440" style="font-size:19.500px">MagicToCopy</text><text x="2894" y="440" style="font-size:19.500px">-1 / -1</text><text x="3094" y="440" style="font-size:19.500px">MagicToNOTCopy</text><text x="3326" y="440" style="font-size:19.500px">123</text>
<text x="2662" y="459" style="font-size:19.500px">CommentToTCopy</text><text x="2894" y="459" style="font-size:19.500px">Label</text><text x="3094" y="459" style="font-size:19.500px">CommentToNOTCopy</text><text x="3326" y="459" style="font-size:19.500px">Label</text>
<text x="2662" y="478" style="font-size:19.500px">StartTrade by DD</text><text x="2894" y="478" style="font-size:19.500px;fill:#ff8a80">OFF</text><text x="3094" y="478" style="font-size:19.500px">StopTrade by DD</text><text x="3326" y="478" style="font-size:19.500px;fill:#ff8a80">OFF</text>
<text x="2662" y="497" style="font-size:19.500px">StartTrade by Profit</text><text x="2894" y="497" style="font-size:19.500px;fill:#ff8a80">OFF</text><text x="3094" y="497" style="font-size:19.500px">StopTrade by Profit</text><text x="3326" y="497" style="font-size:19.500px;fill:#ff8a80">OFF</text>
<text x="2662" y="517" style="font-size:19.500px">Only Active Deals</text><text x="2894" y="517" style="font-size:19.500px">0:0 - 23:59</text>
<text x="2662" y="584" style="font-size:19.500px">Lots SELL</text><text x="2810" y="584" style="font-size:19.500px;fill:#ff8a80">0.01 (1)</text><text x="3094" y="584" style="font-size:19.500px">Lots BUY</text><text x="3267" y="584" style="font-size:19.500px">0.00 (0)</text>
<text x="2662" y="604" style="font-size:19.500px">Loss</text><text x="2810" y="604" style="font-size:19.500px;fill:#ff8a80">-24p (-0.26€)</text><text x="3094" y="604" style="font-size:19.500px">Profit</text><text x="3267" y="604" style="font-size:19.500px">0p (0.00€)</text>
<text x="2662" y="623" style="font-size:19.500px">Target SL</text><text x="2810" y="623" style="font-size:19.500px">0p (0.00€)</text><text x="3094" y="623" style="font-size:19.500px">Target SL</text><text x="3267" y="623" style="font-size:19.500px">0p (0.00€)</text>
<text x="2662" y="642" style="font-size:19.500px">Target TP</text><text x="2810" y="642" style="font-size:19.500px">0p (0.00€)</text><text x="3094" y="642" style="font-size:19.500px">Target TP</text><text x="3267" y="642" style="font-size:19.500px">0p (0.00€)</text>
<text x="2662" y="709" style="font-size:19.500px">Balance</text><text x="2801" y="709" style="font-size:19.500px">399459.78€</text><text x="3094" y="709" style="font-size:19.500px">Equity</text><text x="3233" y="709" style="font-size:19.500px;fill:#ff8a80">399459.52€</text>
<text x="2662" y="729" style="font-size:19.500px">Free Marg</text><text x="2801" y="729" style="font-size:19.500px">399451.05€</text><text x="3094" y="729" style="font-size:19.500px">Free Lots</text><text x="3233" y="729" style="font-size:19.500px;fill:#1de9b6">471.82/471.77</text>
<text x="2662" y="748" style="font-size:19.500px">Loss</text><text x="2801" y="748" style="font-size:19.500px;fill:#ff8a80">-0.26€</text><text x="3094" y="748" style="font-size:19.500px">DrawDown</text><text x="3233" y="748" style="font-size:19.500px;fill:#ff8a80">-0.00007%</text>
</g>
<rect x="2649" y="815" width="858" height="40" fill="#263238"/>
<text x="2651" y="848" style="font-size:26px;fill:#00e5ff">EA</text><text x="2685" y="848" style="font-size:26px;fill:#2196f3">Pad</text><text x="2723" y="849" style="font-size:28px;fill:#ff4081">PRO</text>
<rect x="3014" y="828" width="64" height="3" fill="#00e5ff"/><rect x="3030" y="834" width="64" height="3" fill="#2196f3"/><rect x="3046" y="840" width="64" height="3" fill="#ff4081"/>
<text x="3258" y="846" style="font-size:22px;fill:#eeeeee">EXPFOREX 2008-2025</text>

<!-- right terminal -->
<rect x="1911" y="1342" width="38" height="576" fill="url(#sd)"/>
<path d="M1921 1350l14 15m0-15l-14 15" stroke="#333" stroke-width="3"/>
<path d="M2135.500 1342V1420M2264.500 1342V1420M2480.500 1342V1420M2624.500 1342V1420M2769.500 1342V1420M2912.500 1342V1420M3056.500 1342V1420M3200.500 1342V1420M3344.500 1342V1420M3503.500 1342V1420" stroke="#d4d4d4"/>
<text x="1961" y="1372" style="font-size:23px">Symbol</text><text x="2148" y="1372" style="font-size:23px">Ticket</text>
<g class="e"><text x="2423" y="1372" style="font-size:23px">Time</text><text x="2613" y="1372" style="font-size:23px">Type</text><text x="2757" y="1372" style="font-size:23px">Volume</text><text x="2900" y="1372" style="font-size:23px">Price</text><text x="3045" y="1372" style="font-size:23px">S / L</text><text x="3189" y="1372" style="font-size:23px">T / P</text><text x="3333" y="1372" style="font-size:23px">Price</text><text x="3491" y="1372" style="font-size:23px">Profit</text><text x="3815" y="1372" style="font-size:23px">Comment</text></g>
<path d="M2445 1365h14l-7-8z"/>
<rect x="1958" y="1387" width="20" height="28" rx="3" fill="#fff" stroke="#d63a3a" stroke-width="2.500"/><path d="M1964 1394h7M1964 1401h7" stroke="#d63a3a" stroke-width="2"/>
<text x="1992" y="1410" style="font-size:23px">usdchf</text><text x="2142" y="1410" style="font-size:23px">4037277...</text><text x="2275" y="1410" style="font-size:22.500px">2025.07.01 15:22:...</text>
<g class="e"><text x="2617" y="1410" style="font-size:23px">sell</text><text x="2761" y="1410" style="font-size:23px">0.01</text><text x="2905" y="1410" style="font-size:23px">0.78946</text><text x="3337" y="1410" style="font-size:23px">0.78969</text><text x="3461" y="1410" class="rd" style="font-size:23px">-0.25</text></g>
<path d="M3478 1395l13 15m0-15l-13 15" stroke="#999" stroke-width="1.500"/>
<rect x="1949" y="1420" width="1878" height="40" fill="#c8c8c8"/>
<circle cx="1968" cy="1440" r="10" fill="none" stroke="#222" stroke-width="2"/><path d="M1962 1440h12" stroke="#222" stroke-width="2"/>
<text x="1992" y="1449" class="b" style="font-size:23px" textLength="1308" lengthAdjust="spacingAndGlyphs">Balance: 399 459.78 EUR  Equity: 399 459.53  Margin: 8.47  Free Margin: 399 451.06  Margin Level: 4 716 169.19 %</text>
<text x="3461" y="1449" class="b e" style="font-size:23px">-0.25</text>
<path d="M2053 1916.500H3827" stroke="#222" stroke-width="1.500"/>
<text transform="translate(1928,1870) rotate(-90)" class="e" style="font-size:23px;font-family:'DejaVu Sans',sans-serif">Toolbox</text>

<!-- red arrow -->
<polygon points="1300,1702 1330,1687 1324,1697 2673,1697 2673,1707 1324,1707 1330,1717" fill="#555" opacity=".5" filter="url(#bs)"/>
<polygon points="1292,1697 1320,1682 1316,1692 2665,1692 2665,1702 1316,1702 1320,1712" fill="#ff4444"/>
</svg>
</body></html>
